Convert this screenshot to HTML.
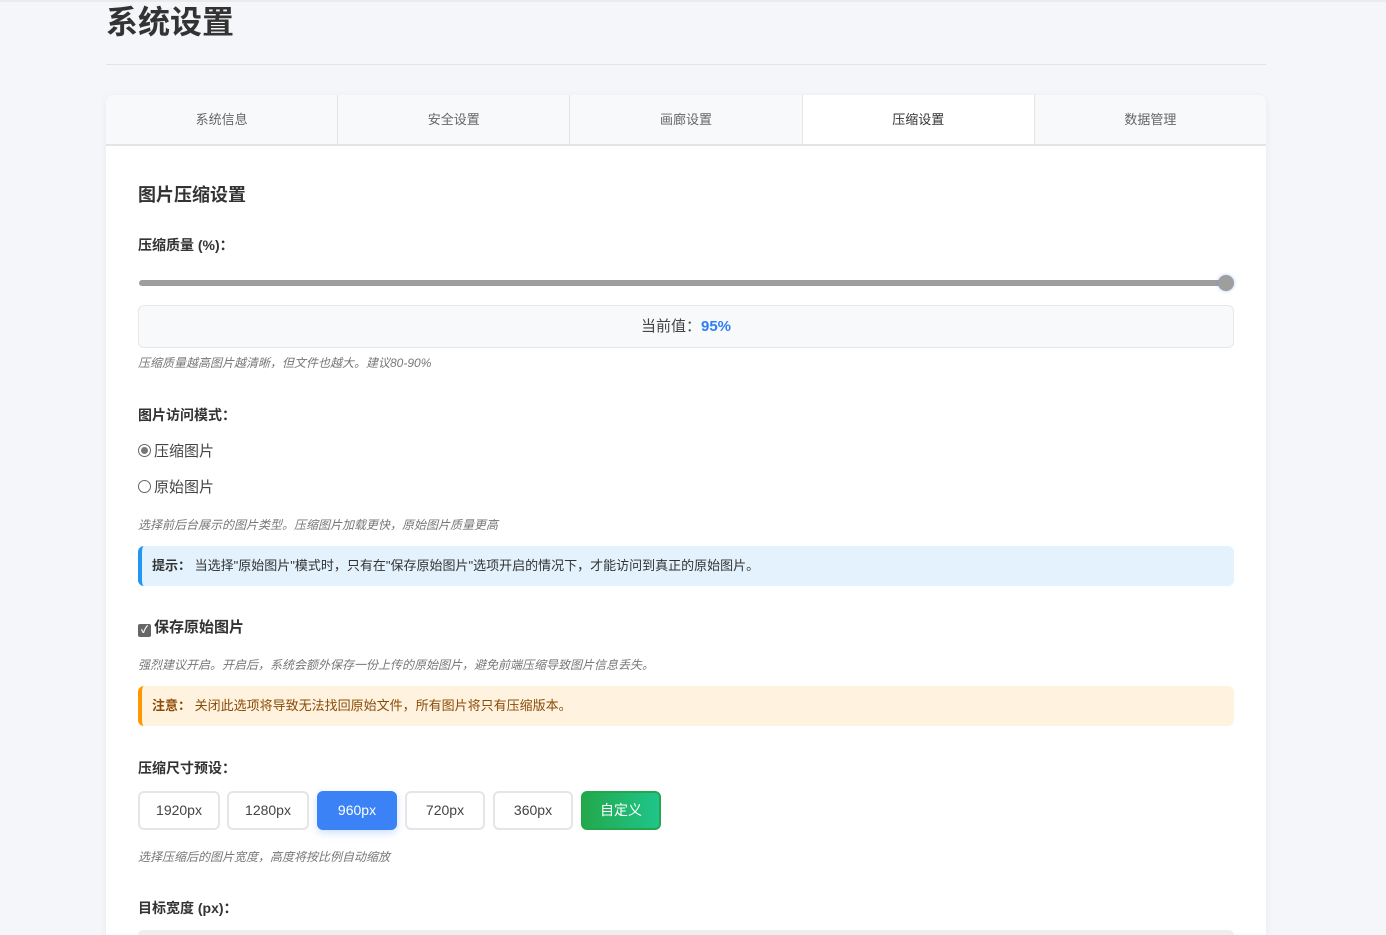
<!DOCTYPE html>
<html><head><meta charset="utf-8"><style>
*{box-sizing:border-box;margin:0;padding:0}
html,body{width:1386px;height:935px;overflow:hidden}
body{background:#f5f6fa;font-family:"Liberation Sans","Noto Sans CJK SC",sans-serif;color:#333;position:relative}
.topline{position:absolute;left:0;top:0;width:1386px;height:2px;background:#ebebeb}
.wrap{position:absolute;left:106px;width:1160px;top:0}
h1{position:absolute;top:2px;left:0;font-size:32px;font-weight:bold;color:#333;line-height:40px}
.hr{position:absolute;top:64px;left:0;width:1160px;height:1px;background:#e3e3e6}
.card{position:absolute;top:95px;left:0;width:1160px;height:860px;background:#fff;border-radius:8px;box-shadow:0 2px 8px rgba(0,0,0,.06);overflow:hidden}
.tabs{display:flex;height:51px;border-bottom:2px solid #e3e3e8;background:#f8f9fa}
.tab{flex:1;text-align:center;line-height:49px;font-size:13px;color:#666;border-right:1px solid #e5e5e5}
.tab:last-child{border-right:none}
.tab.on{background:#fff;color:#333}
.c{position:absolute;left:32px;width:1096px}
.lbl{font-size:14px;font-weight:bold;color:#333}
.hint{font-size:12px;font-style:italic;color:#777}
.box{border-radius:6px;height:40px;line-height:40px;padding-left:10px;font-size:13px}
.btn{position:absolute;top:0;height:39px;border:2px solid #e5e5e8;border-radius:6px;text-align:center;line-height:35px;font-size:14px;color:#444;background:#fff}
</style></head><body>
<div class="topline"></div>
<div class="wrap">
<h1>系统设置</h1>
<div class="hr"></div>
<div class="card">
<div class="tabs"><div class="tab">系统信息</div><div class="tab">安全设置</div><div class="tab">画廊设置</div><div class="tab on">压缩设置</div><div class="tab">数据管理</div></div>
<div class="c" style="top:86px;font-size:18px;font-weight:bold;color:#333">图片压缩设置</div>
<div class="c lbl" style="top:140px">压缩质量 (%)：</div>
<div class="c" style="top:185px;height:6px;background:#9e9e9e;border-radius:3px;width:1088px;left:33px"></div>
<div style="position:absolute;left:1112px;top:180px;width:16px;height:16px;border-radius:50%;background:#9e9e9e;box-shadow:0 0 3px rgba(80,140,255,.5)"></div>
<div class="c" style="top:210px;height:43px;background:#f8f9fa;border:1px solid #e6e8ea;border-radius:6px;text-align:center;line-height:41px;font-size:15px;color:#444">当前值：<b style="color:#2d7ff9">95%</b></div>
<div class="c hint" style="top:259px">压缩质量越高图片越清晰，但文件也越大。建议80-90%</div>
<div class="c lbl" style="top:310px">图片访问模式：</div>
<div class="c" style="top:345px;font-size:15px;color:#444"><span style="display:inline-block;width:13px;height:13px;border:1px solid #666;border-radius:50%;vertical-align:-1px;position:relative;margin-right:3px"><span style="position:absolute;left:2px;top:2px;width:7px;height:7px;border-radius:50%;background:#777"></span></span>压缩图片</div>
<div class="c" style="top:381px;font-size:15px;color:#444"><span style="display:inline-block;width:13px;height:13px;border:1px solid #666;border-radius:50%;vertical-align:-1px;margin-right:3px"></span>原始图片</div>
<div class="c hint" style="top:421px">选择前后台展示的图片类型。压缩图片加载更快，原始图片质量更高</div>
<div class="c box" style="top:451px;background:#e3f2fd;border-left:4px solid #2196f3;color:#333"><b>提示：</b> 当选择"原始图片"模式时，只有在"保存原始图片"选项开启的情况下，才能访问到真正的原始图片。</div>
<div class="c lbl" style="top:521px;font-size:15px"><span style="display:inline-block;width:13px;height:13px;background:#666;border-radius:2px;vertical-align:-1px;margin-right:3px;color:#fff;font-size:10px;line-height:13px;text-align:center">✓</span>保存原始图片</div>
<div class="c hint" style="top:561px">强烈建议开启。开启后，系统会额外保存一份上传的原始图片，避免前端压缩导致图片信息丢失。</div>
<div class="c box" style="top:591px;background:#fff3e0;border-left:4px solid #ff9800;color:#8a4b08"><b>注意：</b> 关闭此选项将导致无法找回原始文件，所有图片将只有压缩版本。</div>
<div class="c lbl" style="top:663px">压缩尺寸预设：</div>
<div class="c" style="top:696px;height:40px">
<div class="btn" style="left:0;width:82px">1920px</div>
<div class="btn" style="left:89px;width:82px">1280px</div>
<div class="btn" style="left:179px;width:80px;background:#3b82f6;border-color:#3b82f6;color:#fff;box-shadow:0 3px 8px rgba(59,130,246,.25)">960px</div>
<div class="btn" style="left:267px;width:80px">720px</div>
<div class="btn" style="left:355px;width:80px">360px</div>
<div class="btn" style="left:443px;width:80px;background:linear-gradient(90deg,#22a84c,#20c58a);border-color:#22a84c;color:#fff">自定义</div>
</div>
<div class="c hint" style="top:753px">选择压缩后的图片宽度，高度将按比例自动缩放</div>
<div class="c lbl" style="top:803px">目标宽度 (px)：</div>
<div class="c" style="top:835px;height:10px;background:#eee;border-radius:5px"></div>
</div>
</div>
</body></html>
